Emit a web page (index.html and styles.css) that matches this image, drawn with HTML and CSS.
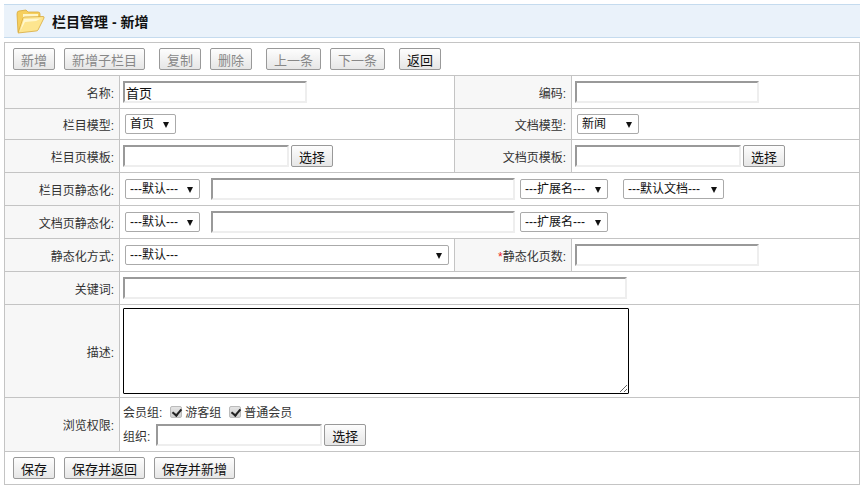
FILE: index.html
```html
<!DOCTYPE html>
<html>
<head>
  <title>栏目管理 - 新增</title>
  <meta charset="utf-8">
  <link rel="stylesheet" href="styles.css">
</head>
<body>
  <div class="title-bar">
    <svg class="folder-icon" width="30" height="26" viewBox="0 0 30 26">
      <path d="M3 24 L2 6 Q2 3 4 3 L11 2 L13 4 L23 4 Q25 4 25 6 L25 9 L9 10 L5 24 Z" fill="#f6cf5e" stroke="#d9a93a" stroke-width="0.8"/>
      <path d="M8 6 L23 6 L23 10 L8 10 Z" fill="#fff6c8"/>
      <path d="M3 25 L8 10 Q8.500 9 10 9 L28 8.500 Q29.500 8.500 29 10 L23 22 Q22.500 23 21 23 Z" fill="#fde58f" stroke="#d8a93c" stroke-width="0.8"/>
      <path d="M5 23.500 L9 11 L26 10.500 L21 13 L10 14 Z" fill="#fff7cf"/>
    </svg>
    <h1>栏目管理 - 新增</h1>
  </div>

  <table class="form-table">
    <colgroup>
      <col class="col-label">
      <col class="col-value">
      <col class="col-label2">
      <col>
    </colgroup>
    <tr>
      <td colspan="4" class="bar-cell">
        <div class="btn-row">
          <button type="button" class="btn" disabled>新增</button>
          <button type="button" class="btn btn-sep" disabled>新增子栏目</button>
          <button type="button" class="btn" disabled>复制</button>
          <button type="button" class="btn btn-sep" disabled>删除</button>
          <button type="button" class="btn" disabled>上一条</button>
          <button type="button" class="btn btn-sep" disabled>下一条</button>
          <button type="button" class="btn">返回</button>
        </div>
      </td>
    </tr>
    <tr>
      <td class="label">名称:</td>
      <td class="value"><input type="text" class="input w-184" value="首页"></td>
      <td class="label">编码:</td>
      <td class="value"><input type="text" class="input w-184"></td>
    </tr>
    <tr>
      <td class="label">栏目模型:</td>
      <td class="value">
        <span class="select-wrap"><select class="select w-51"><option>首页</option></select></span>
      </td>
      <td class="label">文档模型:</td>
      <td class="value">
        <span class="select-wrap"><select class="select w-62"><option>新闻</option></select></span>
      </td>
    </tr>
    <tr>
      <td class="label">栏目页模板:</td>
      <td class="value">
        <div class="field">
          <input type="text" class="input w-164">
          <button type="button" class="btn">选择</button>
        </div>
      </td>
      <td class="label">文档页模板:</td>
      <td class="value">
        <div class="field">
          <input type="text" class="input w-164">
          <button type="button" class="btn">选择</button>
        </div>
      </td>
    </tr>
    <tr>
      <td class="label">栏目页静态化:</td>
      <td class="value" colspan="3">
        <div class="field">
          <span class="select-wrap gap-11"><select class="select w-75"><option>---默认---</option></select></span>
          <input type="text" class="input w-304">
          <span class="select-wrap gap-13"><select class="select w-88"><option>---扩展名---</option></select></span>
          <span class="select-wrap no-indent"><select class="select w-101"><option>---默认文档---</option></select></span>
        </div>
      </td>
    </tr>
    <tr>
      <td class="label">文档页静态化:</td>
      <td class="value" colspan="3">
        <div class="field">
          <span class="select-wrap gap-11"><select class="select w-75"><option>---默认---</option></select></span>
          <input type="text" class="input w-304">
          <span class="select-wrap"><select class="select w-88"><option>---扩展名---</option></select></span>
        </div>
      </td>
    </tr>
    <tr>
      <td class="label">静态化方式:</td>
      <td class="value">
        <span class="select-wrap"><select class="select w-324"><option>---默认---</option></select></span>
      </td>
      <td class="label"><span class="req">*</span>静态化页数:</td>
      <td class="value"><input type="text" class="input w-184"></td>
    </tr>
    <tr>
      <td class="label">关键词:</td>
      <td class="value" colspan="3"><input type="text" class="input w-504"></td>
    </tr>
    <tr>
      <td class="label">描述:</td>
      <td class="value area-cell" colspan="3"><textarea class="area"></textarea></td>
    </tr>
    <tr>
      <td class="label">浏览权限:</td>
      <td class="value perm-cell" colspan="3">
        <div class="perm-line">
          <span>会员组:</span>
          <label class="check"><input type="checkbox" checked>游客组</label>
          <label class="check"><input type="checkbox" checked>普通会员</label>
        </div>
        <div class="field">
          <span class="org-label">组织:</span>
          <input type="text" class="input w-164">
          <button type="button" class="btn">选择</button>
        </div>
      </td>
    </tr>
    <tr>
      <td colspan="4" class="bar-cell">
        <div class="btn-row">
          <button type="button" class="btn">保存</button>
          <button type="button" class="btn">保存并返回</button>
          <button type="button" class="btn">保存并新增</button>
        </div>
      </td>
    </tr>
  </table>
</body>
</html>
```

FILE: styles.css
```css
* {
  margin: 0;
  padding: 0;
  box-sizing: border-box;
}

body {
  font-family: "Liberation Sans", "Noto Sans CJK SC", sans-serif;
  font-size: 12px;
  color: #333;
  background: white;
  padding: 4px 3px 0 4px;
}

.title-bar {
  display: flex;
  align-items: center;
  height: 34px;
  padding-left: 11px;
  background: #eaf2fa;
  border-top: 1px solid #c5dbee;
  border-bottom: 1px solid #c5dbee;
  margin-bottom: 4px;
}

.folder-icon {
  margin-right: 7px;
}

.title-bar h1 {
  font-size: 14px;
  color: #111;
}

.form-table {
  width: 856px;
  table-layout: fixed;
  border-collapse: collapse;
}

.form-table td {
  border: 1px solid #c4c4c4;
}

.col-label {
  width: 115px;
}

.col-value {
  width: 335px;
}

.col-label2 {
  width: 117px;
}

.label {
  background: #f7f7f7;
  text-align: right;
  padding-right: 5px;
}

.req {
  color: #e22;
}

.value {
  padding: 5px 3px;
  line-height: 0;
}

.bar-cell {
  padding: 5px 8px;
}

.btn-row {
  display: flex;
  gap: 9px;
}

.btn {
  height: 22px;
  padding: 0 7px;
  font-family: inherit;
  font-size: 13px;
  color: #111;
  background: linear-gradient(#fdfdfd, #e6e6e6);
  border: 1px solid #999;
  border-radius: 2px;
}

.btn:disabled {
  color: #888;
}

.btn-sep {
  margin-right: 5px;
}

.field {
  display: flex;
  align-items: center;
  gap: 2px;
}

.input {
  height: 22px;
  padding: 0 1px;
  font-family: inherit;
  font-size: 13px;
  color: #111;
  background: white;
  border: 2px solid;
  border-color: #999 #eee #eee #999;
}

.w-164 { width: 166px; }
.w-184 { width: 184px; }
.w-304 { width: 304px; }
.w-504 { width: 504px; }

.select-wrap {
  position: relative;
  display: inline-block;
  margin-left: 2px;
  line-height: 0;
}

.select-wrap::after {
  content: "";
  position: absolute;
  top: 8px;
  right: 7px;
  border-top: 6px solid #111;
  border-left: 3px solid transparent;
  border-right: 3px solid transparent;
  pointer-events: none;
}

.gap-11 {
  margin-right: 9px;
}

.gap-13 {
  margin-left: 3px;
  margin-right: 11px;
}

.no-indent {
  margin-left: 2px;
}

.field .select-wrap:nth-child(3) {
  margin-left: 3px;
}

.select {
  appearance: none;
  height: 20px;
  padding: 0 4px;
  font-family: inherit;
  font-size: 12px;
  color: #111;
  background: white;
  border: 1px solid #aaa;
  border-radius: 2px;
}

.w-51 { width: 51px; }
.w-62 { width: 62px; }
.w-75 { width: 75px; }
.w-88 { width: 88px; }
.w-101 { width: 101px; }
.w-324 { width: 324px; }

.area-cell {
  padding-top: 3px;
  padding-bottom: 3px;
}

.area {
  display: block;
  width: 506px;
  height: 86px;
  border: 1px solid #000;
  border-radius: 1px;
}

.perm-cell {
  line-height: normal;
  padding-top: 4px;
}

.perm-line {
  display: flex;
  align-items: center;
  height: 19px;
  margin-bottom: 3px;
}

.check {
  display: flex;
  align-items: center;
  margin-left: 8px;
}

.check input {
  appearance: none;
  position: relative;
  width: 12px;
  height: 12px;
  margin-right: 3px;
  background: linear-gradient(#e4e4e4, #cfcfcf);
  border: 1px solid #bbb;
  border-radius: 2px;
}

.check input:checked::after {
  content: "";
  position: absolute;
  left: 3px;
  top: 0;
  width: 4px;
  height: 7px;
  border-right: 2px solid #222;
  border-bottom: 2px solid #222;
  transform: rotate(40deg);
}

.org-label {
  margin-right: 4px;
}
```
